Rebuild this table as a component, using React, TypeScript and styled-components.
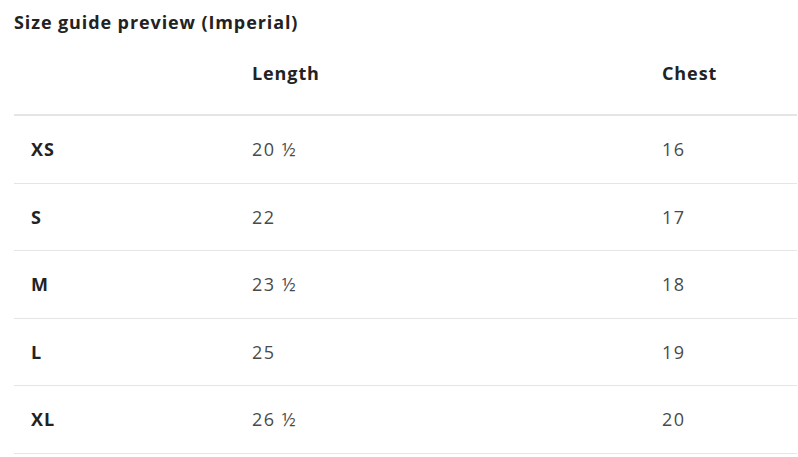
import React from "react";
import styled, { createGlobalStyle } from "styled-components";

const GlobalStyle = createGlobalStyle`
  body {
    margin: 0;
    background: #ffffff;
    font-family: "Open Sans", "Lato", sans-serif;
  }
`;

const Wrapper = styled.div`
  padding: 10px 1px 0 14px;
`;

const Title = styled.h2`
  margin: 0;
  font-size: 18px;
  line-height: 24px;
  font-weight: 700;
  letter-spacing: 0.9px;
  color: #222222;
`;

const Table = styled.table`
  width: 100%;
  border-collapse: collapse;
  table-layout: fixed;
`;

const HeadCell = styled.th<{ $w?: number }>`
  box-sizing: border-box;
  width: ${(p) => (p.$w ? `${p.$w}px` : "auto")};
  text-align: left;
  padding: 27px 17px 29px;
  font-size: 18px;
  font-weight: 700;
  letter-spacing: 0.9px;
  color: #222222;
  border-bottom: 2px solid #e5e5e5;
  line-height: 24px;
`;

const Row = styled.tr`
  border-bottom: 1px solid #e5e5e5;
`;

const SizeCell = styled.td`
  padding: 0 17px;
  height: 66.5px;
  font-size: 18px;
  font-weight: 700;
  letter-spacing: 0.9px;
  color: #222222;
`;

const ValueCell = styled.td`
  padding: 0 17px;
  height: 66.5px;
  font-size: 18px;
  font-weight: 400;
  letter-spacing: 1.5px;
  color: #4a4a4a;
`;

const rows = [
  { size: "XS", length: "20 ½", chest: "16" },
  { size: "S", length: "22", chest: "17" },
  { size: "M", length: "23 ½", chest: "18" },
  { size: "L", length: "25", chest: "19" },
  { size: "XL", length: "26 ½", chest: "20" },
];

export default function App() {
  return (
    <>
      <GlobalStyle />
      <Wrapper>
        <Title>Size guide preview (Imperial)</Title>
        <Table>
          <thead>
            <tr>
              <HeadCell $w={221}></HeadCell>
              <HeadCell $w={410}>Length</HeadCell>
              <HeadCell>Chest</HeadCell>
            </tr>
          </thead>
          <tbody>
            {rows.map((r) => (
              <Row key={r.size}>
                <SizeCell>{r.size}</SizeCell>
                <ValueCell>{r.length}</ValueCell>
                <ValueCell>{r.chest}</ValueCell>
              </Row>
            ))}
          </tbody>
        </Table>
      </Wrapper>
    </>
  );
}
